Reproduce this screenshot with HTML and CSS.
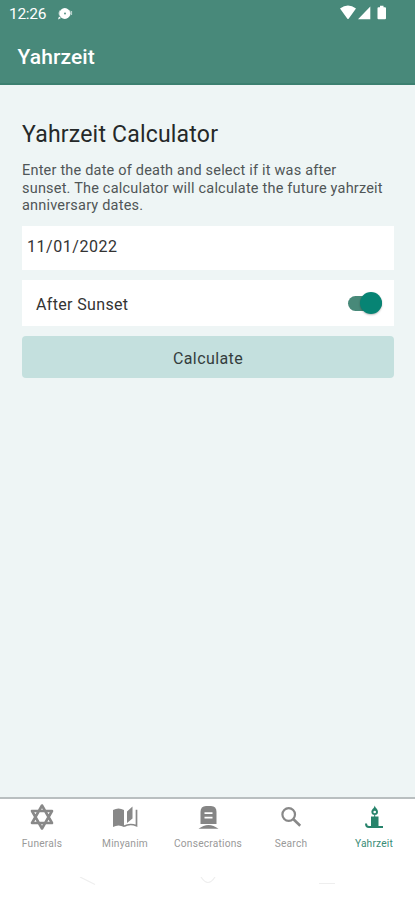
FILE: index.html
```html
<!DOCTYPE html>
<html lang="en">
<head>
<meta charset="utf-8">
<title>Yahrzeit</title>
<link rel="stylesheet" href="styles.css">
</head>
<body>
<div class="app">
  <header class="header">
    <div class="status">
      <span class="clock">12:26</span>
      <svg class="notice" width="16" height="14" viewBox="0 0 16 14"><path d="M3 3.500Q1.300 6 2.600 8.600M12.500 3.200Q14 6 12.500 9M14.500 4v4" fill="none" stroke="#fff" stroke-opacity=".6" stroke-width="1.200"/><circle cx="7.800" cy="6.500" r="5.400" fill="#fff"/><path d="M1 12.500l1-3 2 1.500z" fill="#fff"/><circle cx="8" cy="6.500" r=".9" fill="#48897a"/></svg>
      <svg class="signals" width="48" height="16" viewBox="0 0 48 16"><path d="M0 3.500Q8-2.500 16 3.500L8.800 13.500Q8 14.500 7.200 13.500z M18 14.300L30.300 1.500V14.300z M37.500 3.200Q37.500 2.200 38.500 2.200H40V.7H43.500V2.200H45Q46 2.200 46 3.200V13.300Q46 14.300 45 14.300H38.500Q37.500 14.300 37.500 13.300z" fill="#fff"/></svg>
    </div>
    <h1 class="title">Yahrzeit</h1>
  </header>
  <main class="content">
    <h2 class="heading">Yahrzeit Calculator</h2>
    <p class="intro">Enter the date of death and select if it was after<br>sunset. The calculator will calculate the future yahrzeit<br>anniversary dates.</p>
    <div class="date">11/01/2022</div>
    <div class="option"><span class="label">After Sunset</span><span class="switch"><span class="knob"></span></span></div>
    <button class="calculate">Calculate</button>
  </main>
  <nav class="tabs">
    <div class="tab">
      <svg width="28" height="28" viewBox="0 0 28 28"><path d="M14 2.500L24 20H4zM14 25.500L4 8H24z" fill="none" stroke="#888" stroke-width="2.600" stroke-linejoin="round"/></svg>
      <span>Funerals</span>
    </div>
    <div class="tab">
      <svg width="28" height="28" viewBox="0 0 28 28"><path d="M2 7Q7.500 3.800 13 7V24Q7.500 20.800 2 24zM16 8.500L21.500 3.500V15.500L16 20z" fill="#888"/><path d="M13 23.300Q19 20 25.500 22.800V6.800" fill="none" stroke="#888" stroke-width="1.700"/></svg>
      <span>Minyanim</span>
    </div>
    <div class="tab">
      <svg width="28" height="28" viewBox="0 0 28 28"><path d="M6.500 21V9Q6.500 3 12 3H17Q22.500 3 22.500 9V21z" fill="#858585"/><path d="M10.500 10.200H18.500M10.500 14.700H18.500" stroke="#fff" stroke-width="1.800"/><path d="M4.500 25.800Q14.500 18 24.500 25.800z" fill="#858585"/></svg>
      <span>Consecrations</span>
    </div>
    <div class="tab">
      <svg width="28" height="28" viewBox="0 0 28 28"><circle cx="11.700" cy="11.500" r="6.300" fill="none" stroke="#888" stroke-width="2.200"/><path d="M16.200 16L23.200 22.800" stroke="#888" stroke-width="2.600"/></svg>
      <span>Search</span>
    </div>
    <div class="tab active">
      <svg width="28" height="28" viewBox="0 0 28 28"><path d="M14.700 2.500C15.200 5 18 6.200 18 8.800A3.300 3.300 0 0 1 11.400 8.800C11.400 6.200 14.200 5.500 14.700 2.500z" fill="#27836b"/><circle cx="14.700" cy="9" r="1.300" fill="#fff"/><path d="M14.700 12V14" stroke="#27836b"/><path d="M11 13.500H18.500V24H11z" fill="#27836b"/><path d="M6 20.500Q6 24 9 24H23" fill="none" stroke="#27836b" stroke-width="2"/></svg>
      <span>Yahrzeit</span>
    </div>
  </nav>
  <footer class="system">
    <svg width="415" height="23" viewBox="0 0 415 23"><g fill="none" stroke="#eee" stroke-width="1.200"><path d="M80 0L95 7.500M201 0Q208 11 215 0M319 6.500H335"/></g></svg>
  </footer>
</div>
</body>
</html>
```

FILE: styles.css
```css
* { box-sizing: border-box; }
body { margin: 0; font-family: Roboto, sans-serif; background: #eef5f5; color: #333; }
h1, h2, p { margin: 0; font-weight: 400; }
svg { display: block; }
.app { height: 900px; display: flex; flex-direction: column; }
.header { height: 85px; background: #48897a; border-bottom: 2px solid #3c8070; color: #fff; }
.status { height: 28px; display: flex; align-items: center; padding-left: 9px; }
.clock { width: 48px; font-size: 15.5px; letter-spacing: -.3px; }
.signals { margin-left: 267px; margin-top: -2px; }
.title { padding: 15px 0 0 17.5px; font-size: 21px; line-height: 28px; font-weight: 500; letter-spacing: .1px; }
.content { flex: 1; padding: 35px 21px 0 22px; }
.heading { font-size: 23px; line-height: 30px; color: #252929; letter-spacing: .2px; white-space: nowrap; }
.intro { margin-top: 12px; font-size: 14.5px; line-height: 17.7px; letter-spacing: .2px; white-space: nowrap; color: #505657; }
.date { height: 44px; margin-top: 11px; padding: 11px 5px; background: #fff; font-size: 16px; line-height: 20px; letter-spacing: .55px; }
.option { height: 46px; margin-top: 10px; padding: 0 12px 0 14px; background: #fff; display: flex; align-items: center; justify-content: space-between; font-size: 16px; letter-spacing: .35px; }
.label { padding-top: 2px; }
.switch { width: 34px; height: 15px; border-radius: 8px; background: #488979; display: flex; align-items: center; justify-content: flex-end; }
.knob { width: 22px; height: 22px; flex: none; border-radius: 50%; background: #078474; box-shadow: 0 1px 2px #0004; }
.calculate { display: block; width: 100%; height: 42px; margin-top: 10px; padding: 2px 0 0; border: 0; border-radius: 4px; background: #c4e0de; color: #343d3d; font: 16px Roboto, sans-serif; letter-spacing: .4px; }
.tabs { height: 80px; border-top: 2px solid #b9bfc0; background: #fff; display: grid; grid-template-columns: repeat(5, 1fr); }
.tab { display: flex; flex-direction: column; align-items: center; padding: 4px 0 0 1px; color: #999; font-size: 10.2px; line-height: 14px; letter-spacing: .2px; }
.tab span { margin-top: 6px; }
.active { color: #388b75; }
.system { height: 23px; background: #fff; }
```
